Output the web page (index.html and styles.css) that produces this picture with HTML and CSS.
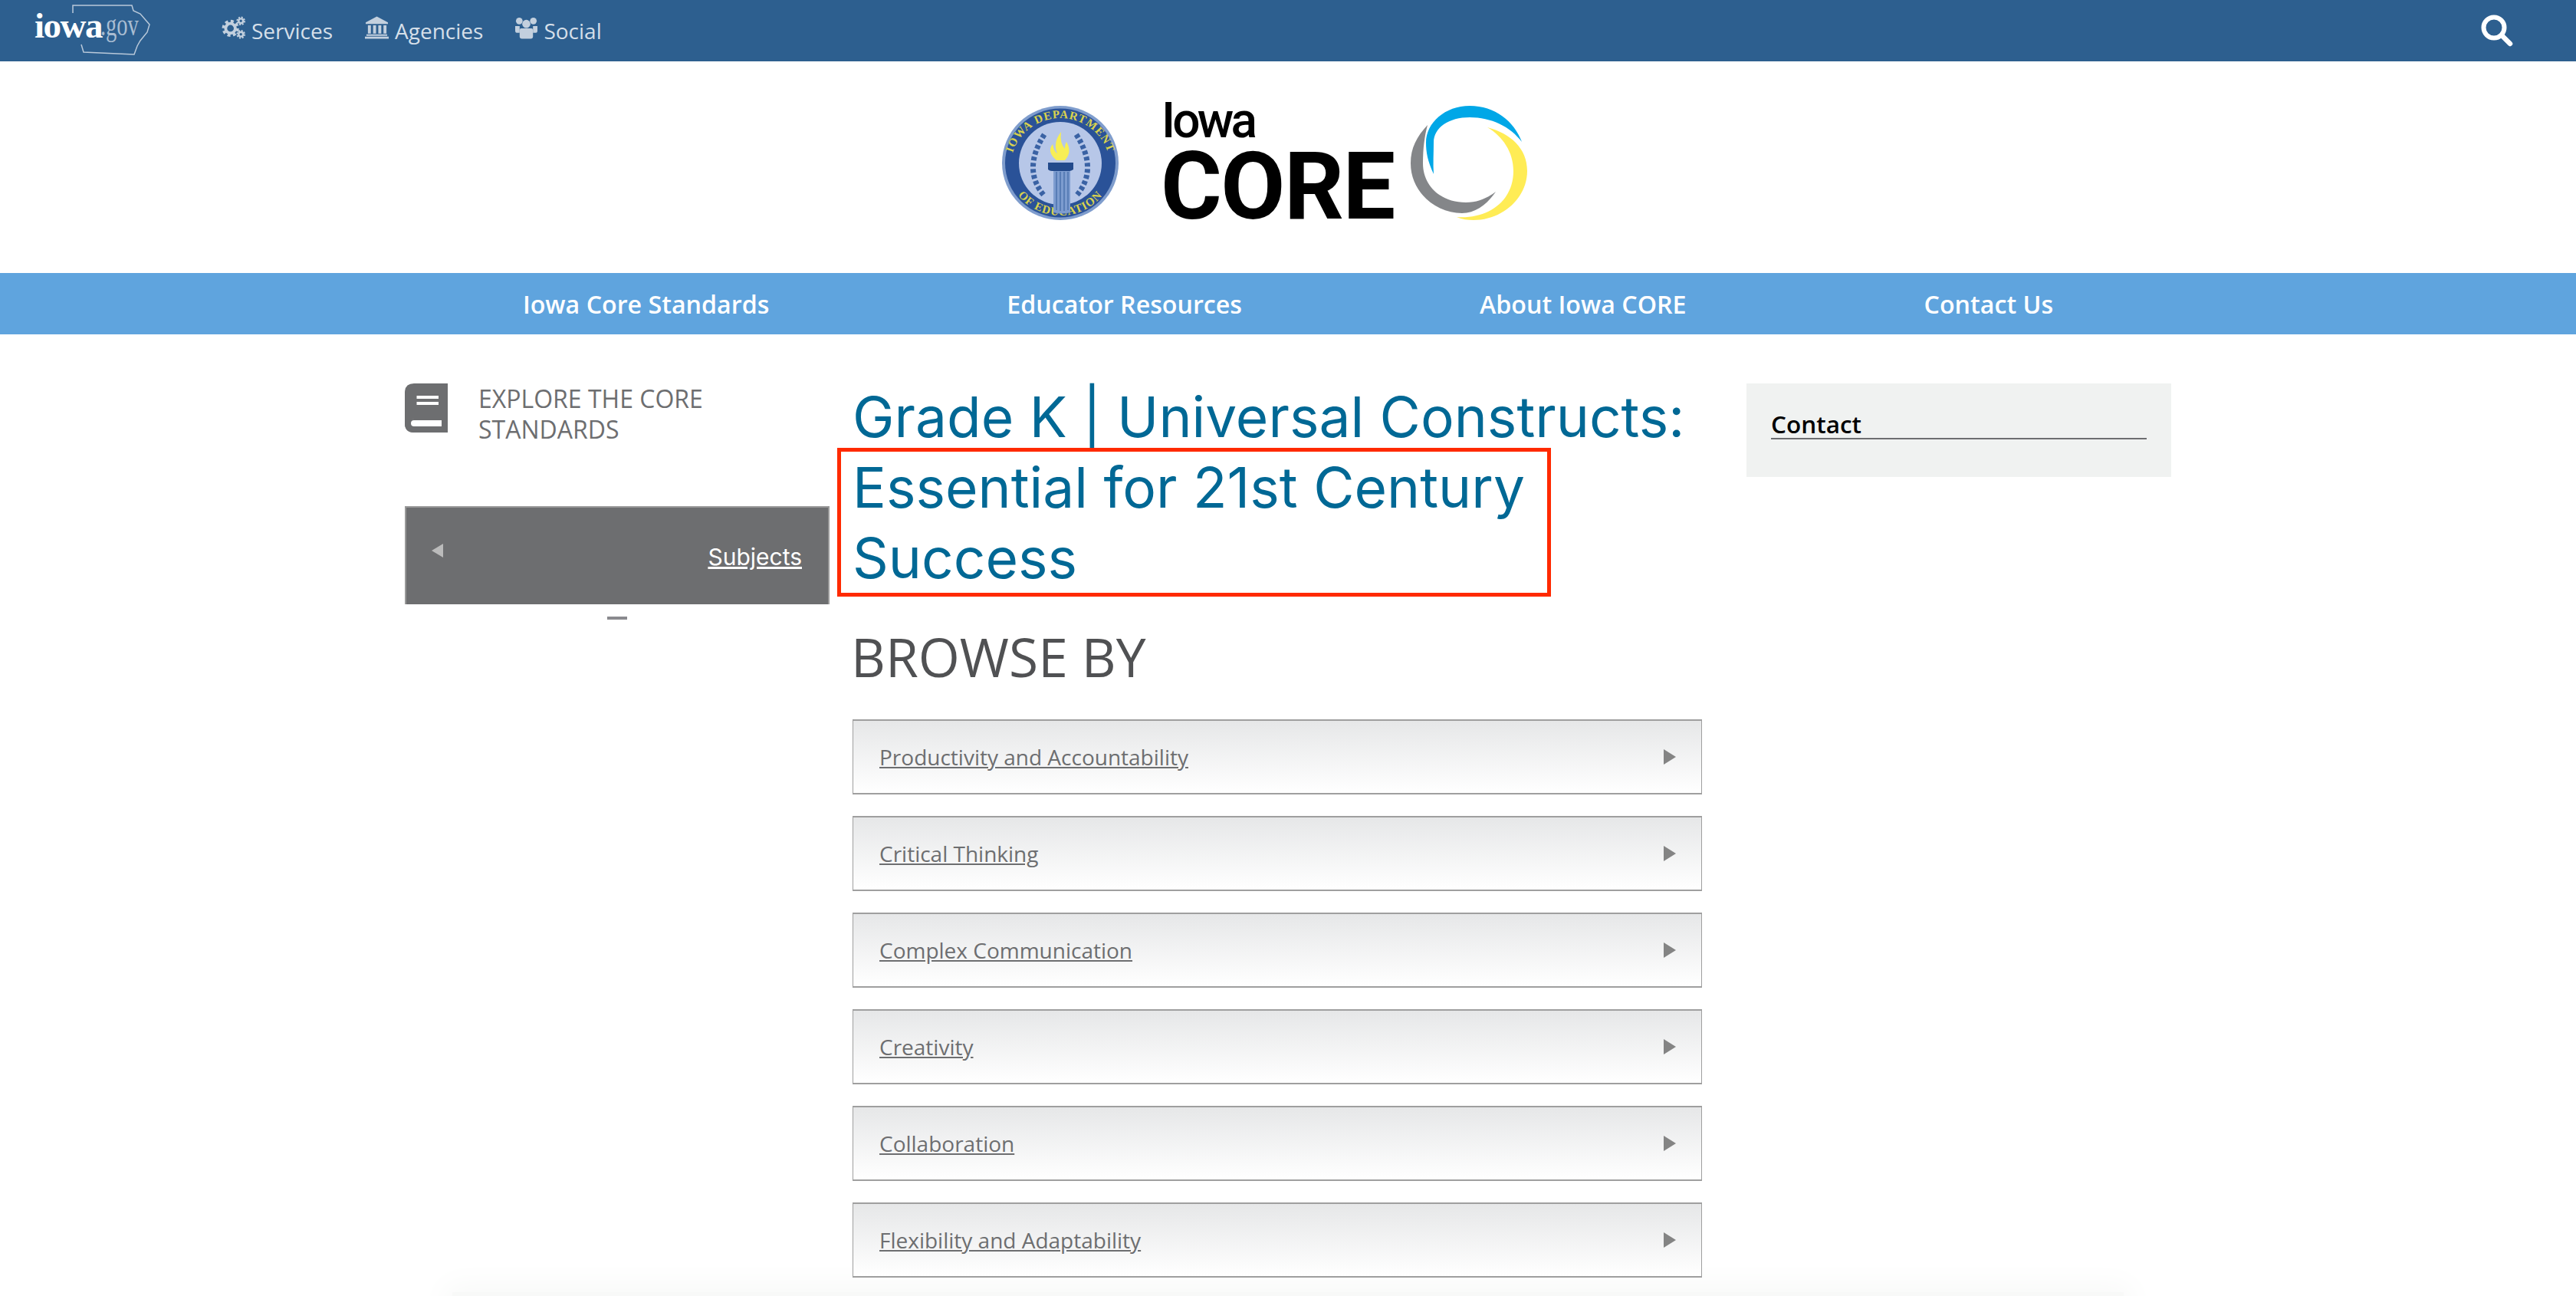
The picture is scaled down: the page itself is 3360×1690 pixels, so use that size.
FILE: index.html
```html
<!DOCTYPE html>
<html lang="en">
<head>
    <meta charset="UTF-8">
    <meta name="viewport" content="width=device-width, initial-scale=1.0">
    <title>Grade K | Universal Constructs</title>
    <link rel="stylesheet" href="styles.css">
</head>
<body>
    <!-- Iowa.gov top bar -->
    <header class="topbar">
        <a class="gov-logo" href="#">
            <svg class="gov-outline" viewBox="0 0 110 70" width="110" height="70">
                <path d="M5 12 L5 2 L82 2 L84 9 L93 13 L105 27 L102 37 L93 48 L89 55 L85 66 L19 63 L16 53" fill="none" stroke="#b9c9da" stroke-width="1.500"/>
            </svg>
            <span class="gov-iowa">iowa</span><span class="gov-dot">.gov</span>
        </a>
        <nav class="topnav">
            <a href="#">
                <svg class="topnav-icon" viewBox="0 0 32 30" width="31" height="30">
                    <circle cx="12" cy="16" r="6.500" fill="none" stroke="#c3d0de" stroke-width="4"/>
                    <circle cx="12" cy="16" r="9.500" fill="none" stroke="#c3d0de" stroke-width="4" stroke-dasharray="4 3.450"/>
                    <circle cx="26" cy="6" r="3" fill="none" stroke="#c3d0de" stroke-width="2.500"/>
                    <circle cx="26" cy="6" r="5" fill="none" stroke="#c3d0de" stroke-width="2" stroke-dasharray="2.200 1.700"/>
                    <circle cx="26" cy="24" r="3" fill="none" stroke="#c3d0de" stroke-width="2.500"/>
                    <circle cx="26" cy="24" r="5" fill="none" stroke="#c3d0de" stroke-width="2" stroke-dasharray="2.200 1.700"/>
                </svg>
                Services
            </a>
            <a href="#">
                <svg class="topnav-icon" viewBox="0 0 32 30" width="31" height="30">
                    <path d="M16 0 L31 8 L31 10 L1 10 L1 8 Z" fill="#c3d0de"/>
                    <path d="M4 12 H8 V23 H4 Z M11 12 H15 V23 H11 Z M18 12 H22 V23 H18 Z M25 12 H29 V23 H25 Z" fill="#c3d0de"/>
                    <path d="M2 24 H30 V26 H2 Z M0 27 H32 V30 H0 Z" fill="#c3d0de"/>
                </svg>
                Agencies
            </a>
            <a href="#">
                <svg class="topnav-icon" viewBox="0 0 30 30" width="29" height="30">
                    <circle cx="5.500" cy="6" r="4.500" fill="#c3d0de"/>
                    <circle cx="24.500" cy="6" r="4.500" fill="#c3d0de"/>
                    <circle cx="15" cy="10" r="5.500" fill="#c3d0de"/>
                    <path d="M0 13 H6 L6 22 H2 Q0 22 0 19 Z M24 13 H30 V19 Q30 22 28 22 H24 Z" fill="#c3d0de"/>
                    <path d="M8 16 H22 Q24 16 24 19 V27 Q24 30 21 30 H9 Q6 30 6 27 V19 Q6 16 8 16 Z" fill="#c3d0de"/>
                </svg>
                Social
            </a>
        </nav>
        <a class="search-btn" href="#">
            <svg viewBox="0 0 42 42" width="42" height="42">
                <circle cx="17" cy="17" r="13.500" fill="none" stroke="#fff" stroke-width="6"/>
                <path d="M27 27 L38 38" stroke="#fff" stroke-width="6.500" stroke-linecap="round"/>
            </svg>
        </a>
    </header>

    <!-- Department seal and Iowa CORE logo -->
    <div class="brand">
        <svg class="seal" viewBox="0 0 152 149" width="152" height="149">
            <defs>
                <path id="sealTop" d="M11 80 A65 64 0 0 1 141 80"/>
                <path id="sealBottom" d="M4 70 A72 73 0 0 0 148 70"/>
            </defs>
            <ellipse cx="76" cy="74.500" rx="76" ry="74.500" fill="#7f9dcd"/>
            <ellipse cx="76" cy="74.500" rx="72" ry="71" fill="#2a5298"/>
            <circle cx="76" cy="75" r="54" fill="#b7c7e8"/>
            <text class="seal-text"><textPath href="#sealTop" startOffset="50%" text-anchor="middle">IOWA DEPARTMENT</textPath></text>
            <text class="seal-text"><textPath href="#sealBottom" startOffset="50%" text-anchor="middle">OF EDUCATION</textPath></text>
            <g fill="none" stroke="#3a62a4" stroke-width="7" stroke-dasharray="5 3">
                <path d="M54 116 Q26 82 56 36"/>
                <path d="M98 116 Q126 82 96 36"/>
            </g>
            <path d="M67 139 V83 H89 V139 Q78 142 67 139 Z" fill="#7d9ccf"/>
            <path d="M71 86 V136 M76 86 V137 M81 86 V137 M86 86 V136" stroke="#4c73ae" stroke-width="1.500"/>
            <path d="M60 74 H93 V83 Q90 85 88 85 H65 Q62 85 60 83 Z" fill="#234a8b"/>
            <path d="M71 71 Q58 60 66 50 Q68 60 72 62 Q66 48 77 34 Q75 48 82 56 Q82 50 84 47 Q92 60 82 71 Z" fill="#f7ee55"/>
        </svg>
        <div class="core-word">
            <span class="core-iowa">Iowa</span>
            <span class="core-core">CORE</span>
        </div>
        <svg class="core-ring" viewBox="0 0 152 149" width="152" height="149">
            <path d="M30 89 C22 72 20 60 20 48 C20 22 45 0 77 0 C110 0 135 20 145 47 C130 27 105 15 77 15 C50 15 30 28 30 48 C30 62 29 75 30 89 Z" fill="#00a7e7"/>
            <path d="M100 28 C130 36 152 55 152 85 C152 120 120 149 82 149 C75 149 67 148 60 145 C100 148 134 125 134 85 C134 60 120 40 100 28 Z" fill="#ffec55"/>
            <path d="M22 25 C8 40 0 55 0 75 C0 112 32 140 67 140 C85 140 100 128 111 112 C100 120 88 126 72 126 C40 126 16 105 16 75 C16 55 18 40 22 25 Z" fill="#848689"/>
        </svg>
    </div>

    <nav class="mainnav">
        <a href="#">Iowa Core Standards</a>
        <a href="#">Educator Resources</a>
        <a href="#">About Iowa CORE</a>
        <a href="#">Contact Us</a>
    </nav>

    <div class="page">
        <aside class="sidebar">
            <div class="explore">
                <svg class="explore-icon" viewBox="0 0 56 64" width="56" height="64">
                    <path d="M12 0 H56 V46 H12 Q8 46 8 52 Q8 58 12 58 H54 L56 64 H12 Q0 64 0 52 V12 Q0 0 12 0 Z" fill="#6d6e70"/>
                    <path d="M12 46 H56 V64 H12 Q0 64 0 52 Q0 46 12 46 Z" fill="#6d6e70"/>
                    <path d="M12 48 H48 V56 H12 Q8 56 8 52 Q8 48 12 48 Z" fill="#fff"/>
                    <rect x="15.500" y="16" width="28.500" height="4" fill="#fff"/>
                    <rect x="15.500" y="24" width="28.500" height="4" fill="#fff"/>
                </svg>
                <span class="explore-text">EXPLORE THE CORE STANDARDS</span>
            </div>
            <div class="subjects">
                <span class="subjects-arrow"></span>
                <a href="#">Subjects</a>
            </div>
            <div class="subjects-dash"></div>
        </aside>

        <main class="content">
            <h1 class="grade-title">
                Grade K | Universal Constructs: Essential for 21st Century Success
                <span class="highlight"></span>
            </h1>
            <h2 class="browse-title">BROWSE BY</h2>
            <div class="row"><a href="#">Productivity and Accountability</a><span class="row-arrow"></span></div>
            <div class="row"><a href="#">Critical Thinking</a><span class="row-arrow"></span></div>
            <div class="row"><a href="#">Complex Communication</a><span class="row-arrow"></span></div>
            <div class="row"><a href="#">Creativity</a><span class="row-arrow"></span></div>
            <div class="row"><a href="#">Collaboration</a><span class="row-arrow"></span></div>
            <div class="row"><a href="#">Flexibility and Adaptability</a><span class="row-arrow"></span></div>
        </main>

        <aside class="contact">
            <h3>Contact</h3>
        </aside>
    </div>

    <div class="bottom-fade"></div>
</body>
</html>
```

FILE: styles.css
```css
/* Reset some default browser styles */
* {
    margin: 0;
    padding: 0;
    box-sizing: border-box;
}

body {
    position: relative;
    height: 1690px;
    overflow: hidden;
    background: #fff;
    font-family: 'Open Sans', sans-serif;
}

a {
    color: inherit;
}

/* Top bar */
.topbar {
    display: flex;
    align-items: center;
    height: 80px;
    background-color: #2d5f8f;
    padding-left: 46px;
    padding-right: 82px;
}

.gov-logo {
    position: relative;
    display: block;
    width: 243px;
    height: 80px;
    text-decoration: none;
    flex-shrink: 0;
}

.gov-outline {
    position: absolute;
    left: 44px;
    top: 5px;
}

.gov-iowa,
.gov-dot {
    position: absolute;
    top: 8px;
    font-family: 'Liberation Serif', serif;
    line-height: 50px;
}

.gov-iowa {
    left: -1px;
    font-size: 47px;
    font-weight: 700;
    color: #fff;
    letter-spacing: -1.500px;
}

.gov-dot {
    left: 85px;
    font-size: 39px;
    color: #a9bdd2;
    transform: scaleX(0.73);
    transform-origin: left center;
}

.topnav {
    display: flex;
    gap: 42px;
}

.topnav a {
    display: flex;
    align-items: center;
    gap: 8px;
    font-size: 28px;
    color: #d5dfe9;
    text-decoration: none;
}

.topnav-icon {
    margin-top: -8px;
}

.search-btn {
    margin-left: auto;
    height: 42px;
}

/* Logo band */
.brand {
    display: flex;
    align-items: center;
    justify-content: center;
    height: 276px;
    padding-bottom: 11px;
    padding-right: 61px;
}

.seal {
    margin-right: 61px;
}

.core-word {
    display: flex;
    flex-direction: column;
    margin-right: 19px;
    width: 301px;
    font-family: 'Roboto', sans-serif;
    color: #000;
}

.core-iowa {
    margin-left: -5px;
    margin-top: 2px;
    font-size: 64px;
    line-height: 50px;
    font-weight: 500;
    letter-spacing: -3.800px;
}

.core-core {
    margin-left: -6px;
    margin-top: 11px;
    font-size: 122px;
    line-height: 100px;
    font-weight: 700;
    letter-spacing: -1.500px;
}

/* Blue nav */
.mainnav {
    display: flex;
    justify-content: center;
    align-items: center;
    gap: 310px;
    height: 80px;
    background-color: #5fa4de;
}

.mainnav a {
    font-size: 32.200px;
    font-weight: 600;
    color: #fff;
    text-decoration: none;
}

/* Three columns */
.page {
    position: relative;
    z-index: 1;
    display: grid;
    grid-template-columns: 584px 1166px 554px;
    width: 2304px;
    margin-left: 528px;
    padding-top: 64px;
}

.sidebar {
    margin-right: 30px;
}

.content {
    margin-right: 58px;
}

.explore {
    display: flex;
    gap: 40px;
    height: 160px;
}

.explore-icon {
    flex-shrink: 0;
}

.explore-text {
    width: 340px;
    font-size: 32px;
    line-height: 40px;
    font-weight: 400;
    color: #6d6e70;
}

.subjects {
    display: flex;
    justify-content: space-between;
    align-items: center;
    height: 128px;
    padding: 0 34px 0 33px;
    background-color: #6d6e70;
    border: 2px solid #999;
    border-bottom: none;
    color: #fff;
    font-family: 'Inter', sans-serif;
    font-size: 30px;
}

.subjects-arrow {
    margin-top: -14px;
    border-top: 9px solid transparent;
    border-bottom: 9px solid transparent;
    border-right: 15px solid #bbb;
}

.subjects a {
    margin-top: 2px;
}

.subjects-dash {
    width: 26px;
    height: 4px;
    margin: 16px auto 0;
    background-color: #8a8a8e;
}

/* Main column */
.grade-title {
    position: relative;
    margin-top: -2px;
    font-family: 'Inter', sans-serif;
    font-size: 73px;
    line-height: 92px;
    font-weight: 400;
    color: #006895;
}

.highlight {
    position: absolute;
    left: -20px;
    top: 86px;
    width: 931px;
    height: 194px;
    border: 5px solid #ff2a00;
}

.browse-title {
    margin-top: 34px;
    margin-bottom: 34px;
    margin-left: -2px;
    font-size: 69.500px;
    line-height: 96px;
    font-weight: 400;
    color: #505153;
}

.row {
    display: flex;
    justify-content: space-between;
    align-items: center;
    height: 98px;
    margin-bottom: 28px;
    padding: 0 33px 0 34px;
    background: linear-gradient(#e6e7e8, #fff);
    border: 1px solid #9f9f9f;
    border-top-width: 2px;
    border-bottom-width: 2px;
    font-size: 28px;
    color: #6d6e70;
}

.row-arrow {
    border-top: 10px solid transparent;
    border-bottom: 10px solid transparent;
    border-left: 16px solid #848484;
}

/* Contact box */
.contact {
    height: 122px;
    padding: 32px 32px 0;
    background-color: #f0f2f1;
}

.contact h3 {
    height: 41px;
    border-bottom: 2px solid #6d6e70;
    font-size: 31.500px;
    line-height: 41px;
    font-weight: 600;
    color: #000;
}

/* Faint band at the foot of the page */
.bottom-fade {
    position: absolute;
    left: 590px;
    top: 1685px;
    width: 2180px;
    height: 60px;
    background: #f8f9f8;
    box-shadow: 0 0 40px 10px #f8f9f8;
}

.seal-text {
    font-family: 'Liberation Serif', serif;
    font-size: 15px;
    font-weight: 700;
    letter-spacing: 1px;
    fill: #d9d24e;
}
```
